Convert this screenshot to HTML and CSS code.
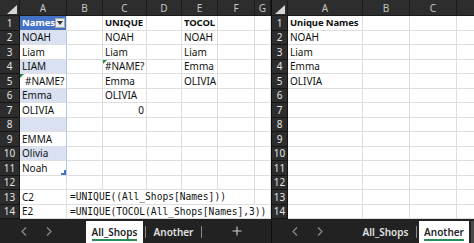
FILE: index.html
```html
<!DOCTYPE html>
<html>
<head>
<meta charset="utf-8">
<link rel="stylesheet" href="styles.css">
</head>
<body>
<div class="app">
  <section class="win win-left">
    <div class="sheet sheet-left">
      <div class="hd corner"><svg width="10" height="9" viewBox="0 0 10 9"><polygon points="10,0 10,9 0,9" fill="#d6d6d6"/></svg></div>
      <div class="hd">A</div><div class="hd">B</div><div class="hd">C</div><div class="hd">D</div><div class="hd">E</div><div class="hd">F</div><div class="hd">G</div>

      <div class="rn">1</div>
      <div class="cell th">Names<span class="dd"><svg width="6" height="4" viewBox="0 0 6 4"><polygon points="0,0 6,0 3,4" fill="#333"/></svg></span></div>
      <div class="cell"></div><div class="cell b">UNIQUE</div><div class="cell"></div><div class="cell b">TOCOL</div><div class="cell"></div><div class="cell"></div>

      <div class="rn">2</div>
      <div class="cell band">NOAH</div><div class="cell"></div><div class="cell">NOAH</div><div class="cell"></div><div class="cell">NOAH</div><div class="cell"></div><div class="cell"></div>

      <div class="rn">3</div>
      <div class="cell tbl">Liam</div><div class="cell"></div><div class="cell">Liam</div><div class="cell"></div><div class="cell">Liam</div><div class="cell"></div><div class="cell"></div>

      <div class="rn">4</div>
      <div class="cell band">LIAM</div><div class="cell"></div><div class="cell err">#NAME?</div><div class="cell"></div><div class="cell">Emma</div><div class="cell"></div><div class="cell"></div>

      <div class="rn">5</div>
      <div class="cell tbl err indent">#NAME?</div><div class="cell"></div><div class="cell">Emma</div><div class="cell"></div><div class="cell">OLIVIA</div><div class="cell"></div><div class="cell"></div>

      <div class="rn">6</div>
      <div class="cell band">Emma</div><div class="cell"></div><div class="cell">OLIVIA</div><div class="cell"></div><div class="cell"></div><div class="cell"></div><div class="cell"></div>

      <div class="rn">7</div>
      <div class="cell tbl">OLIVIA</div><div class="cell"></div><div class="cell r">0</div><div class="cell"></div><div class="cell"></div><div class="cell"></div><div class="cell"></div>

      <div class="rn">8</div>
      <div class="cell band"></div><div class="cell"></div><div class="cell"></div><div class="cell"></div><div class="cell"></div><div class="cell"></div><div class="cell"></div>

      <div class="rn">9</div>
      <div class="cell tbl">EMMA</div><div class="cell"></div><div class="cell"></div><div class="cell"></div><div class="cell"></div><div class="cell"></div><div class="cell"></div>

      <div class="rn">10</div>
      <div class="cell band">Olivia</div><div class="cell"></div><div class="cell"></div><div class="cell"></div><div class="cell"></div><div class="cell"></div><div class="cell"></div>

      <div class="rn">11</div>
      <div class="cell tbl last">Noah</div><div class="cell"></div><div class="cell"></div><div class="cell"></div><div class="cell"></div><div class="cell"></div><div class="cell"></div>

      <div class="rn">12</div>
      <div class="cell"></div><div class="cell"></div><div class="cell"></div><div class="cell"></div><div class="cell"></div><div class="cell"></div><div class="cell"></div>

      <div class="rn">13</div>
      <div class="cell">C2</div><div class="cell mono span5">=UNIQUE((All_Shops[Names]))</div><div class="cell"></div>

      <div class="rn">14</div>
      <div class="cell">E2</div><div class="cell mono span6">=UNIQUE(TOCOL(All_Shops[Names],3))</div>
    </div>
    <div class="tabbar">
      <div class="nav">
        <span class="arrow"><svg width="6" height="9" viewBox="0 0 6 9"><polyline points="5,0.5 1,4.5 5,8.5" fill="none" stroke="#8c8c8c" stroke-width="1.2"/></svg></span>
        <span class="arrow"><svg width="6" height="9" viewBox="0 0 6 9"><polyline points="1,0.5 5,4.5 1,8.5" fill="none" stroke="#8c8c8c" stroke-width="1.2"/></svg></span>
      </div>
      <div class="tab active w57"><span class="uline">All_Shops</span></div>
      <span class="sep"></span>
      <div class="tab w55">Another</div>
      <span class="sep sep-tight"></span>
      <span class="add"><svg width="10" height="10" viewBox="0 0 10 10"><path d="M5 0.5V9.5M0.5 5H9.5" stroke="#d0d0d0" stroke-width="1.1"/></svg></span>
    </div>
  </section>

  <div class="divider"></div>

  <section class="win win-right">
    <div class="sheet sheet-right">
      <div class="hd corner"><svg width="10" height="9" viewBox="0 0 10 9"><polygon points="10,0 10,9 0,9" fill="#d6d6d6"/></svg></div>
      <div class="hd">A</div><div class="hd">B</div><div class="hd">C</div><div class="hd"></div>

      <div class="rn">1</div><div class="cell b">Unique Names</div><div class="cell"></div><div class="cell"></div><div class="cell"></div>
      <div class="rn">2</div><div class="cell">NOAH</div><div class="cell"></div><div class="cell"></div><div class="cell"></div>
      <div class="rn">3</div><div class="cell">Liam</div><div class="cell"></div><div class="cell"></div><div class="cell"></div>
      <div class="rn">4</div><div class="cell">Emma</div><div class="cell"></div><div class="cell"></div><div class="cell"></div>
      <div class="rn">5</div><div class="cell">OLIVIA</div><div class="cell"></div><div class="cell"></div><div class="cell"></div>
      <div class="rn">6</div><div class="cell"></div><div class="cell"></div><div class="cell"></div><div class="cell"></div>
      <div class="rn">7</div><div class="cell"></div><div class="cell"></div><div class="cell"></div><div class="cell"></div>
      <div class="rn">8</div><div class="cell"></div><div class="cell"></div><div class="cell"></div><div class="cell"></div>
      <div class="rn">9</div><div class="cell"></div><div class="cell"></div><div class="cell"></div><div class="cell"></div>
      <div class="rn">10</div><div class="cell"></div><div class="cell"></div><div class="cell"></div><div class="cell"></div>
      <div class="rn">11</div><div class="cell"></div><div class="cell"></div><div class="cell"></div><div class="cell"></div>
      <div class="rn">12</div><div class="cell"></div><div class="cell"></div><div class="cell"></div><div class="cell"></div>
      <div class="rn">13</div><div class="cell"></div><div class="cell"></div><div class="cell"></div><div class="cell"></div>
      <div class="rn">14</div><div class="cell"></div><div class="cell"></div><div class="cell"></div><div class="cell"></div>
    </div>
    <div class="tabbar">
      <div class="nav nav-right">
        <span class="arrow"><svg width="6" height="9" viewBox="0 0 6 9"><polyline points="5,0.5 1,4.5 5,8.5" fill="none" stroke="#8c8c8c" stroke-width="1.2"/></svg></span>
        <span class="arrow"><svg width="6" height="9" viewBox="0 0 6 9"><polyline points="1,0.5 5,4.5 1,8.5" fill="none" stroke="#8c8c8c" stroke-width="1.2"/></svg></span>
      </div>
      <div class="spacer"></div>
      <div class="tab w59">All_Shops</div>
      <span class="sep sep-right"></span>
      <div class="tab active w50"><span class="uline">Another</span></div>
      <div class="endcap"></div>
    </div>
  </section>
</div>
</body>
</html>
```
FILE: styles.css
```css
* { box-sizing: border-box; }
html, body { margin: 0; padding: 0; }
body {
  width: 474px;
  height: 243px;
  overflow: hidden;
  background: #202020;
  font-family: "Noto Sans", "Open Sans", sans-serif;
  font-size: 10px;
  color: #111;
}
.app { display: flex; height: 243px; }
.win { display: flex; flex-direction: column; overflow: hidden; height: 243px; }
.win-left { width: 271px; flex: none; }
.divider { width: 1px; flex: none; background: #0c0c0c; }
.win-right { flex: 1; min-width: 0; }

.sheet {
  display: grid;
  grid-template-rows: 16px repeat(14, 14.5px);
  background: #fff;
  flex: none;
}
.sheet-left { grid-template-columns: 20px 47px 36px 44px 35px 36px 37px 16px; }
.sheet-right { grid-template-columns: 16px 75px 47px 47px 47px; }

.hd {
  background: #2d2d2d;
  color: #c4c4c4;
  display: flex;
  align-items: center;
  justify-content: center;
  border-right: 1px solid #1b1b1b;
  border-bottom: 1px solid #1b1b1b;
  font-size: 10px;
}
.corner { justify-content: flex-end; align-items: flex-end; padding: 0 2px 1px 0; }
.corner svg { display: block; }

.rn {
  background: #2d2d2d;
  color: #e4e4e4;
  display: flex;
  align-items: center;
  justify-content: center;
  border-right: 1px solid #151515;
  border-bottom: 1px solid #151515;
  font-size: 10px;
}

.cell {
  position: relative;
  display: flex;
  align-items: center;
  padding: 0 2px;
  white-space: nowrap;
  border-right: 1px solid #dedede;
  border-bottom: 1px solid #dedede;
  min-width: 0;
}
.b { font-weight: 700; font-size: 9.5px; letter-spacing: -0.1px; }
.r { justify-content: flex-end; }
.th { background: #4472c4; color: #fff; font-weight: 700; font-size: 9.5px; padding-right: 1px; border-color: #4472c4 #dedede #dedede #dedede; }
.band { background: #d9e1f2; border-right-color: #b4c6e7; }
.tbl { border-right-color: #b4c6e7; }
.indent { padding-left: 5px; }
.dd {
  margin-left: auto;
  width: 10px;
  height: 10px;
  background: #ececec;
  border: 1px solid #a8a8a8;
  display: flex;
  align-items: center;
  justify-content: center;
}
.dd svg { display: block; }
.err::before {
  content: "";
  position: absolute;
  left: 0;
  top: 0;
  border-top: 4px solid #1f8a4c;
  border-right: 4px solid transparent;
}
.last::after {
  content: "";
  position: absolute;
  right: 0;
  bottom: 0;
  width: 3px;
  height: 3px;
  border-right: 2px solid #4472c4;
  border-bottom: 2px solid #4472c4;
}
.mono {
  font-family: "DejaVu Sans Mono", "Liberation Mono", monospace;
  font-size: 9.6px;
  padding-left: 3px;
}
.span5 { grid-column: span 5; }
.span6 { grid-column: span 6; }

.tabbar {
  flex: 1;
  display: flex;
  align-items: stretch;
  background: #222;
  font-size: 10px;
  font-weight: 600;
  color: #e2e2e2;
}
.nav { width: 86px; flex: none; display: flex; padding-left: 11px; }
.nav-right { width: auto; padding-left: 10px; }
.arrow { width: 25px; display: flex; align-items: center; justify-content: center; }
.arrow svg { display: block; }
.spacer { flex: 1; }
.tab {
  flex: none;
  margin-top: 2px;
  display: flex;
  align-items: center;
  justify-content: center;
}
.tab.active { background: #fff; color: #242424; }
.w57 { width: 57px; }
.w55 { width: 55px; }
.w59 { width: 59px; }
.w50 { width: 50px; }
.uline { border-bottom: 2px solid #2f8a55; line-height: 12px; padding-bottom: 1px; margin-top: 2px; }
.sep { width: 1px; height: 12px; align-self: center; margin: 2px 0 0 2px; background: #8a8a8a; flex: none; }
.sep-tight { margin-left: 0; }
.sep-right { margin: 2px 2px 0 1px; }
.add { width: 69px; flex: none; display: flex; align-items: center; justify-content: center; }
.add svg { display: block; }
.endcap { width: 5px; flex: none; border-left: 2px solid #222; background: #4a4a4a; margin-top: 2px; }
```
